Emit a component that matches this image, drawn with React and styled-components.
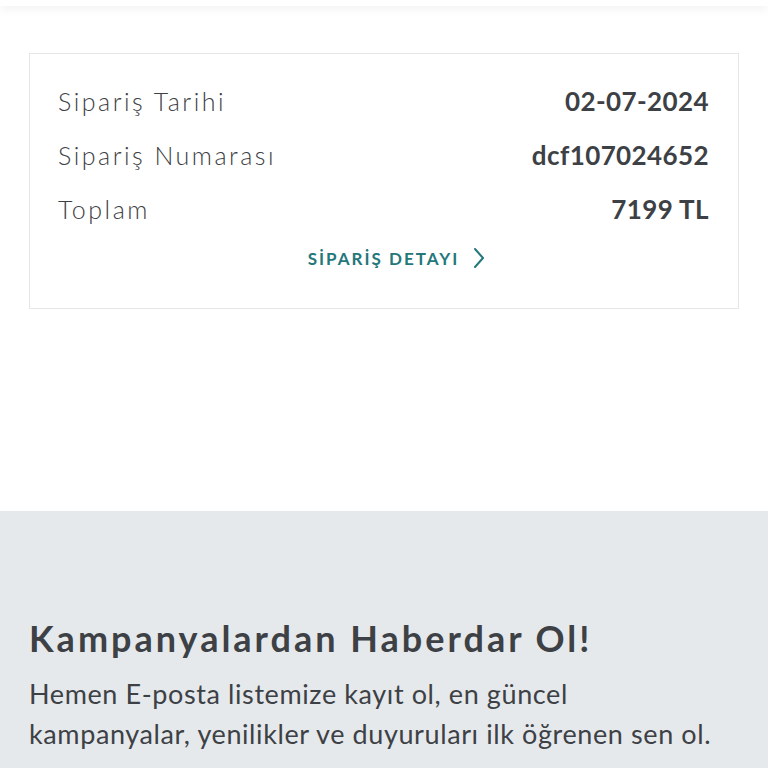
import styled, { createGlobalStyle } from "styled-components";

const Global = createGlobalStyle`
  body {
    margin: 0;
    background: #ffffff;
    font-family: Lato, "Noto Sans", sans-serif;
    color: #3d4145;
  }
`

const Page = styled.div`
  width: 768px;
  height: 768px;
  overflow: hidden;
  display: flex;
  flex-direction: column;
`

const TopBar = styled.div`
  height: 6px;
  background: #ffffff;
  box-shadow: 0 3px 10px rgba(0, 0, 0, 0.07);
  position: relative;
  z-index: 1;
`

const Content = styled.div`
  height: 505px;
  padding: 47px 29px 0 29px;
  box-sizing: border-box;
`

const Card = styled.div`
  height: 256px;
  border: 1px solid #e6e6e6;
  box-sizing: border-box;
  padding: 20px 29px 0 28px;
  display: flex;
  flex-direction: column;
`

const Row = styled.div`
  display: flex;
  justify-content: space-between;
  align-items: center;
  height: 54px;
`

const Label = styled.span`
  font-size: 25px;
  font-weight: 300;
  letter-spacing: 2.5px;
  color: #3d4145;
`

const Value = styled.span`
  font-size: 26px;
  font-weight: 700;
  letter-spacing: 0.4px;
  color: #3d4145;
`

const DetailLink = styled.a`
  align-self: center;
  margin-top: 11px;
  display: flex;
  align-items: center;
  font-size: 17px;
  font-weight: 700;
  letter-spacing: 2px;
  color: #24777a;
  text-decoration: none;
  cursor: pointer;
`

const Chevron = styled.svg`
  margin-left: 14px;
  margin-right: -26px;
`

const Newsletter = styled.div`
  flex: 1;
  background: #e5e9ec;
  padding: 105px 29px 0 29px;
`

const Heading = styled.h2`
  margin: 0;
  font-size: 36px;
  font-weight: 700;
  letter-spacing: 3px;
  color: #3d4145;
`

const Body = styled.p`
  margin: 14px 0 0 0;
  width: 705px;
  font-size: 27px;
  font-weight: 400;
  line-height: 40px;
  letter-spacing: 0.6px;
  color: #3d4145;
`

const rows = [
  ["Sipariş Tarihi", "02-07-2024"],
  ["Sipariş Numarası", "dcf107024652"],
  ["Toplam", "7199 TL"],
]

const App = () => {
  return (
    <Page>
      <Global />
      <TopBar />
      <Content>
        <Card>
          {rows.map(([l, v]) => (
            <Row key={l}>
              <Label>{l}</Label>
              <Value>{v}</Value>
            </Row>
          ))}
          <DetailLink>
            SİPARİŞ DETAYI
            <Chevron width="12" height="22" viewBox="0 0 12 22" fill="none">
              <path d="M2 2l8 9-8 9" stroke="#24777a" strokeWidth="2" strokeLinecap="round" strokeLinejoin="round" />
            </Chevron>
          </DetailLink>
        </Card>
      </Content>
      <Newsletter>
        <Heading>Kampanyalardan Haberdar Ol!</Heading>
        <Body>
          Hemen E-posta listemize kayıt ol, en güncel kampanyalar, yenilikler ve duyuruları ilk öğrenen sen ol.
        </Body>
      </Newsletter>
    </Page>
  )
}

export default App;
